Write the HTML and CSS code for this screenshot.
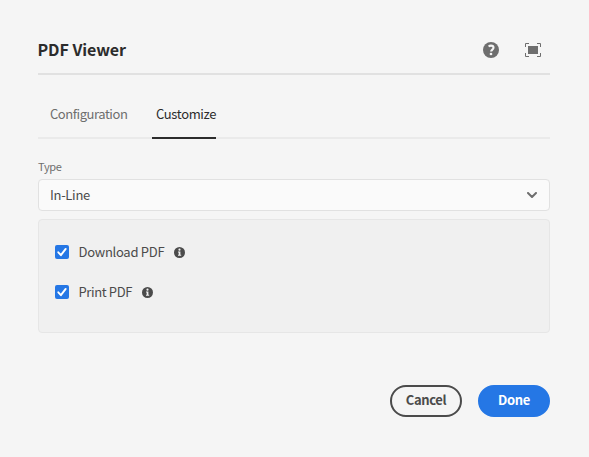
FILE: index.html
```html
<!DOCTYPE html>
<html lang="en">
<head>
<meta charset="utf-8">
<title>PDF Viewer</title>
<link rel="stylesheet" href="styles.css">
</head>
<body>
<main class="dialog">
  <header class="header">
    <h1 class="title">PDF Viewer</h1>
    <div class="tools">
      <svg width="16" height="16" viewBox="0 0 16 16"><circle cx="8" cy="8" r="8" fill="#6e6e6e"/><path d="M5.6 4.5C6.3 3.9 7.1 3.6 8 3.6c1.5 0 2.5.8 2.500 2.100 0 1.800-2.400 2-2.400 3.900" fill="none" stroke="#f5f5f5" stroke-width="2.100"/><circle cx="8" cy="12" r="1.350" fill="#f5f5f5"/></svg>
      <svg width="16" height="14" viewBox="0 0 16 14"><path d="M3 3h10v8H3z" fill="#6e6e6e"/><path d="M.5 4V.5H4M12 .5h3.5V4M.5 10v3.5H4M12 13.5h3.5V10" fill="none" stroke="#6e6e6e"/></svg>
    </div>
  </header>
  <nav class="tabs">
    <a class="tab">Configuration</a>
    <a class="tab selected">Customize</a>
  </nav>
  <label class="label">Type</label>
  <div class="select"><span class="value">In-Line</span>
    <svg width="10" height="6" viewBox="0 0 10 6"><path d="M1 1l4 4 4-4" fill="none" stroke="#6e6e6e" stroke-width="2" stroke-linecap="round" stroke-linejoin="round"/></svg>
  </div>
  <section class="panel">
    <div class="option">
      <svg width="14" height="14" viewBox="0 0 14 14"><rect width="14" height="14" rx="2" fill="#2577e5"/><path d="M3.3 7.3l2.6 2.9 4.8-6.3" fill="none" stroke="#fff" stroke-width="1.9" stroke-linecap="round" stroke-linejoin="round"/></svg>
      <span class="download">Download PDF</span>
      <svg width="11" height="11" viewBox="0 0 11 11"><circle cx="5.5" cy="5.5" r="5.5" fill="#4b4b4b"/><path d="M4 4.400h2.400v3.400h.8v1H4v-1h.7V5.400H4z" fill="#f0f0f0"/><circle cx="5.5" cy="2.700" r="1.100" fill="#f0f0f0"/></svg>
    </div>
    <div class="option">
      <svg width="14" height="14" viewBox="0 0 14 14"><rect width="14" height="14" rx="2" fill="#2577e5"/><path d="M3.3 7.3l2.6 2.9 4.8-6.3" fill="none" stroke="#fff" stroke-width="1.9" stroke-linecap="round" stroke-linejoin="round"/></svg>
      <span class="print">Print PDF</span>
      <svg width="11" height="11" viewBox="0 0 11 11"><circle cx="5.5" cy="5.5" r="5.5" fill="#4b4b4b"/><path d="M4 4.400h2.400v3.400h.8v1H4v-1h.7V5.400H4z" fill="#f0f0f0"/><circle cx="5.5" cy="2.700" r="1.100" fill="#f0f0f0"/></svg>
    </div>
  </section>
  <footer class="footer">
    <button class="button">Cancel</button>
    <button class="button primary">Done</button>
  </footer>
</main>
</body>
</html>
```

FILE: styles.css
```css
* { box-sizing: border-box; }
body {
  margin: 0;
  background: #f5f5f5;
  color: #4b4b4b;
  font: 13px/20px "Noto Sans CJK SC", "Open Sans", sans-serif;
}
svg { display: block; flex: none; }
.dialog { width: 512px; margin: 0 0 0 38px; padding-top: 26px; }
.header {
  display: flex;
  align-items: center;
  justify-content: space-between;
  height: 49px;
  border-bottom: 2px solid #e1e1e1;
}
.title {
  margin: 0 0 0 -0.5px;
  padding-bottom: 2px;
  font-size: 16px;
  line-height: 20px;
  font-weight: 700;
  letter-spacing: -0.05px;
  color: #2c2c2c;
}
.tools { display: flex; align-items: center; gap: 26px; padding-right: 9px; }
.tabs {
  display: flex;
  gap: 21px;
  height: 64px;
  padding-left: 8px;
  border-bottom: 2px solid #eaeaea;
}
.tab {
  display: flex;
  align-items: center;
  width: 85px;
  height: 64px;
  padding: 16px 0 0 4px;
  color: #6e6e6e;
  white-space: nowrap;
  letter-spacing: -0.45px;
  border-bottom: 2px solid transparent;
}
.selected { width: 64px; color: #2c2c2c; letter-spacing: -0.35px; border-color: #2c2c2c; }
.label {
  display: block;
  height: 40px;
  padding-top: 17px;
  font-size: 11px;
  line-height: 20px;
  letter-spacing: -0.3px;
  color: #6e6e6e;
}
.select {
  display: flex;
  align-items: center;
  justify-content: space-between;
  height: 32px;
  padding: 0 12px 0 11px;
  border: 1px solid #e1e1e1;
  border-radius: 4px;
  background: #fafafa;
}
.value { letter-spacing: -0.3px; }
.panel {
  height: 114px;
  margin-top: 8px;
  padding: 22px 16px;
  border: 1px solid #e6e6e6;
  border-radius: 4px;
  background: #f0f0f0;
}
.option { display: flex; align-items: center; height: 20px; margin-bottom: 20px; }
.option span { margin: 0 10px 0 9.5px; white-space: nowrap; }
.download { letter-spacing: -0.27px; }
.print { letter-spacing: -0.38px; }
.footer { display: flex; justify-content: flex-end; gap: 16px; margin-top: 52px; }
.button {
  width: 72px;
  height: 32px;
  padding: 0 0 2px;
  border: 2px solid #4b4b4b;
  border-radius: 16px;
  background: transparent;
  color: #4b4b4b;
  font: 700 13px/20px "Noto Sans CJK SC", "Open Sans", sans-serif;
  letter-spacing: -0.4px;
}
.primary { border-color: #2577e5; background: #2577e5; color: #fff; letter-spacing: -0.3px; }
```
